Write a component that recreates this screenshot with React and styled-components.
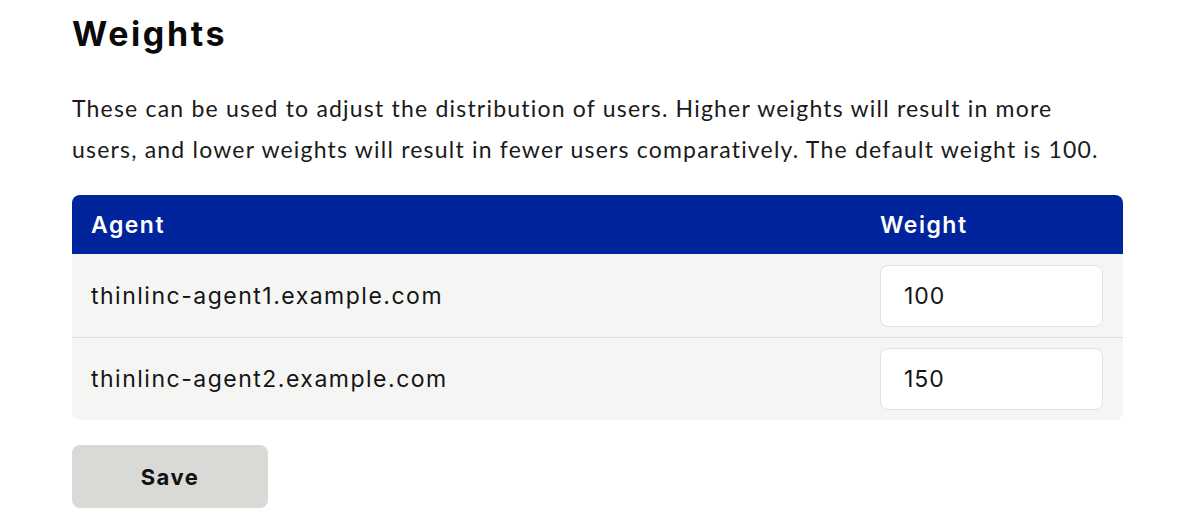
import React from 'react';
import styled, { createGlobalStyle } from 'styled-components';

const GlobalStyle = createGlobalStyle`
  body {
    margin: 0;
    background: #ffffff;
    color: #111111;
  }
`;

const heading = `"Inter", "Noto Sans", sans-serif`;
const body = `"Lato", "Noto Sans", sans-serif`;

const Page = styled.div`
  padding: 14px 77px 0 72px;
  width: 1200px;
  box-sizing: border-box;
`;

const Title = styled.h1`
  margin: 0;
  font-family: ${heading};
  font-size: 34px;
  font-weight: 700;
  letter-spacing: 2.6px;
  line-height: 40px;
  color: #0a0a0a;
`;

const Intro = styled.p`
  max-width: 1048px;
  margin: 34px 0 25px;
  font-family: ${body};
  font-size: 23px;
  letter-spacing: 1.2px;
  line-height: 41px;
  color: #1a1a1a;
`;

const Table = styled.div`
  border-radius: 8px;
  overflow: hidden;
  background: #f5f5f4;
`;

const Row = styled.div`
  display: grid;
  grid-template-columns: 1fr 243px;
  align-items: center;
  height: ${({ $head }) => ($head ? '59px' : '83px')};
  background: ${({ $head }) => ($head ? '#00249c' : 'transparent')};
  border-top: ${({ $divider }) => ($divider ? '1px solid #dcdcdc' : 'none')};
  box-sizing: border-box;
`;

const HeadCell = styled.div`
  padding-left: ${({ $first }) => ($first ? '19px' : '0')};
  font-family: ${heading};
  font-size: 23px;
  font-weight: 600;
  letter-spacing: 1.5px;
  color: #ffffff;
`;

const Cell = styled.div`
  padding-left: 19px;
  font-family: ${heading};
  font-size: 23px;
  letter-spacing: 1.5px;
  color: #141414;
`;

const WeightCell = styled.div`
  padding-right: 20px;
`;

const Input = styled.input`
  width: 223px;
  height: 62px;
  box-sizing: border-box;
  border: 1px solid #e2e2e2;
  border-radius: 8px;
  background: #ffffff;
  padding: 0 23px;
  font-family: ${heading};
  font-size: 23px;
  letter-spacing: 1px;
  color: #141414;
  outline: none;
`;

const SaveButton = styled.button`
  margin-top: 25px;
  width: 196px;
  height: 63px;
  border: none;
  border-radius: 8px;
  background: #d9d9d6;
  font-family: ${heading};
  font-size: 22px;
  font-weight: 700;
  letter-spacing: 1.5px;
  color: #111111;
`;

const agents = [
  { name: 'thinlinc-agent1.example.com', weight: '100' },
  { name: 'thinlinc-agent2.example.com', weight: '150' },
];

export default function App() {
  return (
    <Page>
      <GlobalStyle />
      <Title>Weights</Title>
      <Intro>
        These can be used to adjust the distribution of users. Higher weights will result in more
        users, and lower weights will result in fewer users comparatively. The default weight is 100.
      </Intro>
      <Table>
        <Row $head>
          <HeadCell $first>Agent</HeadCell>
          <HeadCell>Weight</HeadCell>
        </Row>
        {agents.map((a, i) => (
          <Row key={a.name} $divider={i > 0}>
            <Cell>{a.name}</Cell>
            <WeightCell>
              <Input defaultValue={a.weight} />
            </WeightCell>
          </Row>
        ))}
      </Table>
      <SaveButton>Save</SaveButton>
    </Page>
  );
}
